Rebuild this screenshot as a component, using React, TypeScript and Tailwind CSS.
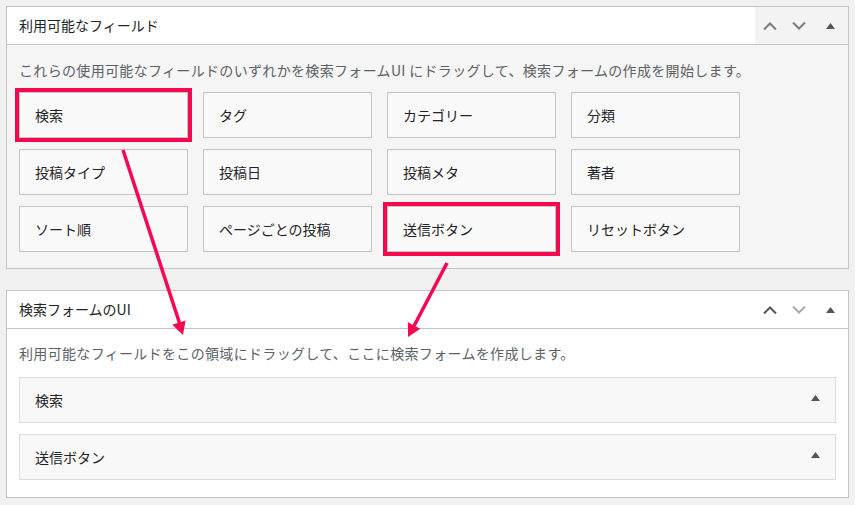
import React from "react";

const fields = [
  "検索",
  "タグ",
  "カテゴリー",
  "分類",
  "投稿タイプ",
  "投稿日",
  "投稿メタ",
  "著者",
  "ソート順",
  "ページごとの投稿",
  "送信ボタン",
  "リセットボタン",
];

// highlighted with the red annotation box
const marked = ["検索", "送信ボタン"];

function Chevron({ dir, color }: { dir: "up" | "down"; color: string }) {
  return (
    <svg width="14" height="8" viewBox="0 0 14 8" className="block">
      <polyline
        points={dir === "up" ? "1,7.5 7,1.5 13,7.5" : "1,0.5 7,6.5 13,0.5"}
        fill="none"
        stroke={color}
        strokeWidth="2"
      />
    </svg>
  );
}

function Tri({ color = "#50575e" }: { color?: string }) {
  return (
    <svg width="9" height="6" viewBox="0 0 9 6" className="block">
      <polygon points="4.5,0 9,6 0,6" fill={color} />
    </svg>
  );
}

function PanelHeader({
  title,
  hover,
}: {
  title: string;
  hover?: boolean;
}) {
  return (
    <div className="flex h-[38px] border-b border-[#c3c4c7] bg-white">
      <h2 className="flex-1 pl-[12px] text-[14px] leading-[37px] text-[#1d2327]">
        {title}
      </h2>
      <div
        className={`flex h-[37px] w-[93px] items-center ${
          hover ? "bg-[#f3f3f3]" : "bg-white"
        }`}
      >
        <button className="flex w-[29px] justify-center">
          <Chevron dir="up" color={hover ? "#787c82" : "#50575e"} />
        </button>
        <button className="flex w-[29px] justify-center">
          <Chevron dir="down" color={hover ? "#787c82" : "#a7aaad"} />
        </button>
        <button className="flex w-[35px] justify-center">
          <Tri />
        </button>
      </div>
    </div>
  );
}

export default function App() {
  return (
    <div
      className="relative h-[505px] w-[855px] overflow-hidden bg-[#f0f0f1] pl-[6px] pt-[6px]"
      style={{ fontFamily: '"Noto Sans CJK JP", "Noto Sans", sans-serif' }}
    >
      {/* Available fields */}
      <div className="w-[843px] border border-[#c3c4c7] bg-[#f5f5f5]">
        <PanelHeader title="利用可能なフィールド" hover />
        <div className="px-[12px] pb-[16px] pt-[14px]">
          <p className="text-[14px] leading-[22px] tracking-[0.33px] text-[#5c6167]">
            これらの使用可能なフィールドのいずれかを検索フォームUI にドラッグして、検索フォームの作成を開始します。
          </p>
          <div className="mt-[11px] grid grid-cols-[repeat(4,169px)] gap-x-[15px] gap-y-[11px]">
            {fields.map((f) => (
              <div
                key={f}
                className={`flex h-[46px] items-center border border-[#c3c4c7] bg-[#f9f9f9] pl-[15px] text-[14px] text-[#1d2327] ${
                  marked.includes(f) ? "shadow-[0_0_0_4px_#f7074f]" : ""
                }`}
              >
                {f}
              </div>
            ))}
          </div>
        </div>
      </div>

      {/* Search form UI */}
      <div className="mt-[21px] w-[843px] border border-[#c3c4c7] bg-white">
        <PanelHeader title="検索フォームのUI" />
        <div className="px-[12px] pb-[17px] pt-[13px]">
          <p className="text-[14px] leading-[22px] tracking-[0.33px] text-[#5c6167]">
            利用可能なフィールドをこの領域にドラッグして、ここに検索フォームを作成します。
          </p>
          <div className="mt-[13px] flex flex-col gap-[11px]">
            {["検索", "送信ボタン"].map((f) => (
              <div
                key={f}
                className="flex h-[46px] items-center justify-between border border-[#dcdcde] bg-[#f8f8f8] pl-[15px] pr-[15px] text-[14px] text-[#1d2327]"
              >
                <span>{f}</span>
                <span className="-mt-[4px]">
                  <Tri />
                </span>
              </div>
            ))}
          </div>
        </div>
      </div>

      {/* annotation arrows */}
      <svg
        width="855"
        height="505"
        className="pointer-events-none absolute left-0 top-0"
      >
        <line x1="123" y1="150" x2="179.5" y2="323" stroke="#f7074f" strokeWidth="3.5" />
        <polygon points="183,335 172.3,324.8 185.6,320.4" fill="#f7074f" />
        <line x1="447" y1="263" x2="414" y2="326" stroke="#f7074f" strokeWidth="3.5" />
        <polygon points="408,337 407.9,322.2 420.3,328.8" fill="#f7074f" />
      </svg>
    </div>
  );
}
